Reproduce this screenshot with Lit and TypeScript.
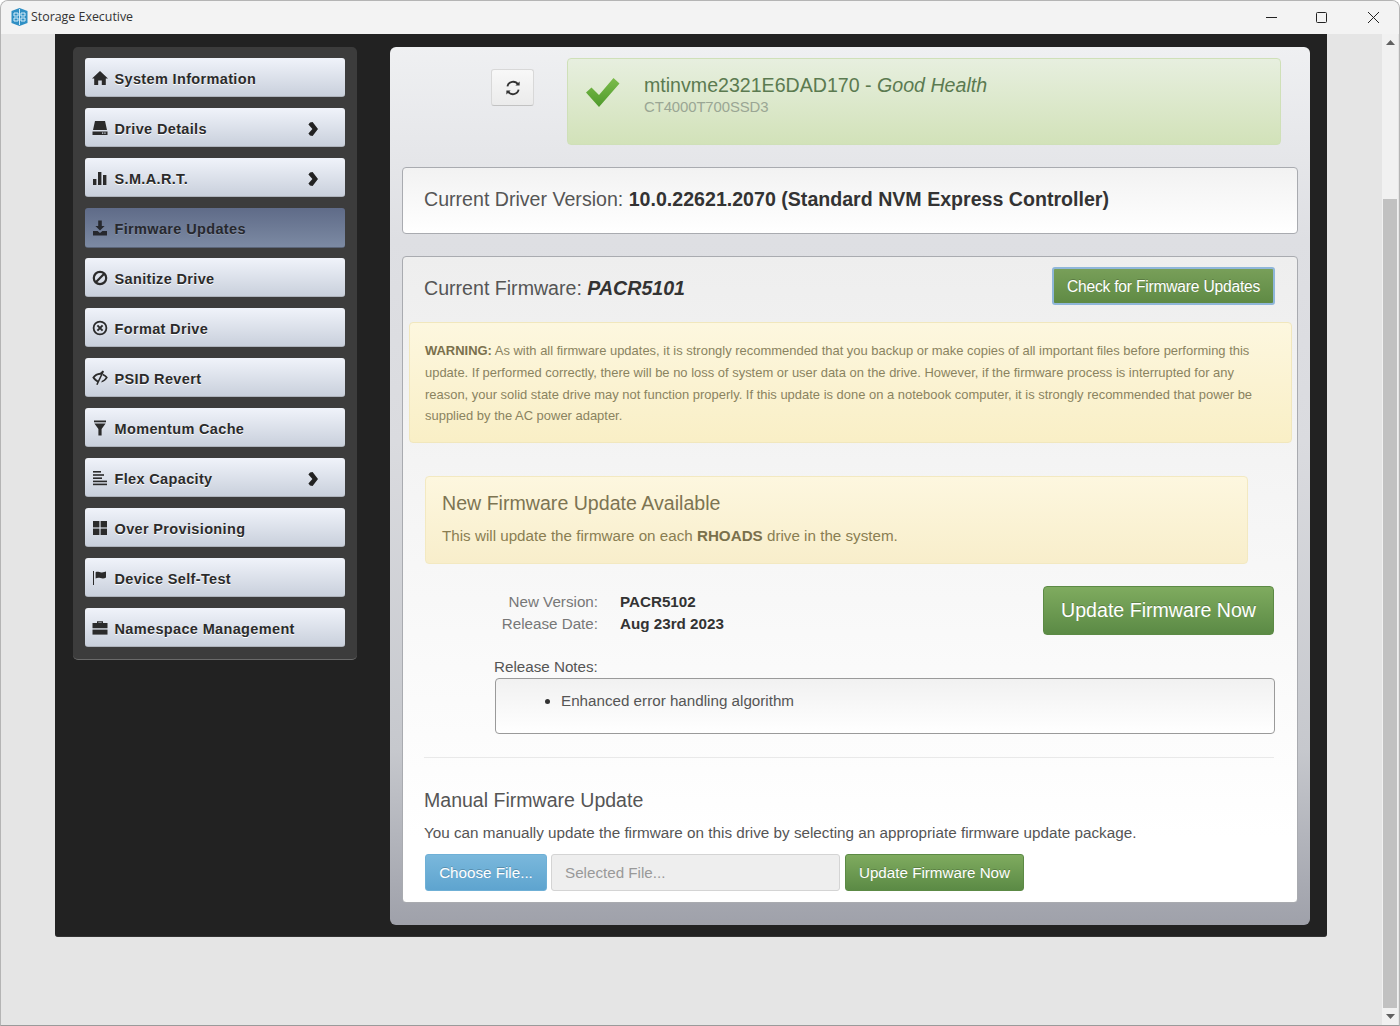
import { LitElement, html, css, svg } from "lit";
import { customElement } from "lit/decorators.js";

const icons: Record<string, unknown> = {
  home: svg`<path d="M8 1 L16 8.6 L13.8 8.6 L13.8 15 L9.8 15 L9.8 10.5 L6.2 10.5 L6.2 15 L2.2 15 L2.2 8.6 L0 8.6 Z"/>`,
  drive: svg`<path d="M3 1 H13 L15 10 H1 Z"/><path fill-rule="evenodd" d="M0.5 11.5 H15.5 V15 H0.5 Z M10 12.6 V13.8 H11.3 V12.6 Z M12.3 12.6 V13.8 H13.6 V12.6 Z"/>`,
  bars: svg`<rect x="1" y="9" width="3.4" height="6"/><rect x="6" y="2" width="3.4" height="13"/><rect x="11" y="5" width="3.4" height="10"/>`,
  download: svg`<path d="M6.2 0.5 H9.8 V6 H12.6 L8 10.6 L3.4 6 H6.2 Z"/><path d="M1 11 H5.6 L8 13 L10.4 11 H15 V15.5 H1 Z"/>`,
  ban: svg`<circle cx="8" cy="8" r="6.2" fill="none" stroke="currentColor" stroke-width="2.2"/><path d="M3.8 12.2 L12.2 3.8" stroke="currentColor" stroke-width="2.2"/>`,
  xcircle: svg`<circle cx="8" cy="8" r="6.4" fill="none" stroke="currentColor" stroke-width="1.8"/><path d="M5.4 5.4 L10.6 10.6 M10.6 5.4 L5.4 10.6" stroke="currentColor" stroke-width="2"/>`,
  eye: svg`<path fill-rule="evenodd" d="M0.3 7.6 C2.4 4.6 5 3 8.2 2.8 L10.8 0.6 L12 1.6 L5.6 15 L4.2 14.4 L5.2 12.2 C3.2 11.2 1.6 9.6 0.3 7.6 Z M2.6 7.6 C3.6 9 4.8 10 6 10.6 L8.8 4.8 C6.2 4.6 4 5.8 2.6 7.6 Z"/><path d="M11 3.8 C12.9 4.6 14.6 5.9 15.8 7.6 C14.2 10.2 12 11.8 9.2 12.4 L9.9 10.8 C11.5 10.2 12.8 9.2 13.7 7.6 C12.8 6.6 11.8 5.9 10.4 5.2 Z"/>`,
  filter: svg`<rect x="2" y="0.5" width="12" height="1.8"/><path d="M2.4 3.6 H13.6 L9.6 9 V15.5 H6.4 V9 Z"/>`,
  lines: svg`<rect x="1" y="1" width="8" height="1.6"/><rect x="1" y="4.2" width="11" height="1.6"/><rect x="1" y="7.4" width="9" height="1.6"/><rect x="1" y="10.6" width="14" height="1.6"/><rect x="1" y="13.6" width="14" height="1.6"/>`,
  grid: svg`<rect x="1" y="1" width="6.4" height="6.4"/><rect x="8.6" y="1" width="6.4" height="6.4"/><rect x="1" y="8.6" width="6.4" height="6.4"/><rect x="8.6" y="8.6" width="6.4" height="6.4"/>`,
  flag: svg`<rect x="1" y="1" width="1" height="14"/><path d="M3.6 2.2 C6 1 7.6 2.8 10 2.4 C11.6 2.2 13 1.6 14 1.4 V7.6 C12.4 8.6 10.4 8.8 8.4 8 C6.8 7.4 5 7.6 3.6 8.4 Z"/>`,
  case: svg`<path fill-rule="evenodd" d="M5 3 V1.2 H11 V3 H15.5 V8.2 H0.5 V3 Z M6.3 2.4 V3 H9.7 V2.4 Z"/><rect x="0.5" y="9.6" width="15" height="5"/>`,
  chev: svg`<path d="M5 1.4 L7.6 1 L13 8 L7.6 15 L5 14.6 L3.4 12.6 L7.4 8 L3.4 3.4 Z"/>`,
};

const nav = [
  { t: "System Information", i: "home" },
  { t: "Drive Details", i: "drive", more: true },
  { t: "S.M.A.R.T.", i: "bars", more: true },
  { t: "Firmware Updates", i: "download", active: true },
  { t: "Sanitize Drive", i: "ban" },
  { t: "Format Drive", i: "xcircle" },
  { t: "PSID Revert", i: "eye" },
  { t: "Momentum Cache", i: "filter" },
  { t: "Flex Capacity", i: "lines", more: true },
  { t: "Over Provisioning", i: "grid" },
  { t: "Device Self-Test", i: "flag" },
  { t: "Namespace Management", i: "case" },
];

@customElement("app-root")
export class AppRoot extends LitElement {
  static styles = css`
    :host { display: block; font-family: "Liberation Sans", Arial, sans-serif; color: #333; }
    * { box-sizing: border-box; }
    .window { width: 1400px; height: 1026px; display: flex; flex-direction: column; background: #e5e5e5; border: 1px solid #b4b4b4; border-bottom-color: #9a9a9a; border-radius: 8px 8px 0 0; overflow: hidden; }
    .titlebar { height: 33px; flex: none; background: #f3f3f3; display: flex; align-items: center; padding: 0 0 2px 10px; font-size: 12.4px; color: #333; font-family: "Open Sans", sans-serif; }
    .logo { width: 17px; height: 18px; margin-right: 3px; flex: none; }
    .wctl { margin-left: auto; display: flex; height: 100%; align-items: center; padding-top: 2px; }
    .wctl span { width: 52px; display: flex; justify-content: center; }
    .wctl span:first-child { padding-left: 4px; }
    .wctl svg { width: 13px; height: 13px; fill: none; stroke: #222; stroke-width: 1; }
    .content { flex: 1; display: flex; min-height: 0; }
    .scroller { flex: 1; padding: 0 0 0 54px; }
    .panel { width: 1272px; height: 903px; background: #222; border-radius: 0 0 3px 3px; padding: 13px 17px 12px 18px; display: flex; border-bottom: 1px solid #333; }
    .side { width: 284px; height: 613px; flex: none; background: #3c3c3c; border-radius: 5px; border-bottom: 1px solid #6a6a6a; padding: 11px 12px; display: flex; flex-direction: column; gap: 11px; }
    .nav { height: 39px; flex: none; display: flex; align-items: center; padding: 3px 0 0 7px; border-radius: 3px; background: linear-gradient(#f0f3fa, #c9d0dc); border-bottom: 1px solid #aeb3bc; font-weight: 700; font-size: 14.5px; letter-spacing: 0.35px; color: #2b2b2b; text-shadow: 0 1px 0 #fff; }
    .nav.active { background: linear-gradient(#5f6b88, #7c8aa3); border-bottom-color: #5b6578; height: 40px; margin-bottom: -1px; padding-top: 2px; color: #26282e; text-shadow: 0 1px 0 #8a94a8; }
    .nav .ic { width: 16px; height: 16px; fill: currentColor; flex: none; margin-right: 6.5px; margin-top: -2px; }
    .nav .ch { margin-left: auto; margin-right: 24px; width: 16px; height: 16px; fill: #222; flex: none; }
    .main { margin-left: 33px; width: 920px; height: 878px; border-radius: 6px; background: linear-gradient(#eff0f2, #dedfe3 22%, #dadbdf 45%, #c6c8cd 80%, #9fa1aa); padding: 11px 12px 22px; display: flex; flex-direction: column; }
    .top { display: flex; height: 87px; flex: none; }
    .refresh { width: 43px; height: 37px; margin: 11px 33px 0 89px; background: linear-gradient(#f8f8f8, #ebebeb); border: 1px solid #d8d8d8; border-bottom: 1px solid #c2c2c2; border-radius: 3px; display: flex; align-items: center; justify-content: center; }
    .refresh svg { width: 16px; height: 16px; fill: none; stroke: #333; stroke-width: 1.9; }
    .health { width: 714px; background: linear-gradient(#e7efdf, #d2e2b9); border: 1px solid #cfe0b8; border-radius: 4px; display: flex; padding: 14px 0 0 18px; }
    .health svg { width: 34px; height: 32px; margin-top: 4px; margin-right: 24px; flex: none; }
    .hname { font-size: 19.6px; color: #5b7a50; line-height: 24px; }
    .hname i { font-style: italic; }
    .hsub { font-size: 14.9px; color: #9aa694; line-height: 18px; letter-spacing: -0.1px; margin-top: 1px; }
    .card { background: linear-gradient(#f2f2f2, #fff); border: 1px solid #a9abb0; border-radius: 4px; }
    .driver { height: 67px; margin-top: 22px; flex: none; display: flex; align-items: center; padding: 0 0 3px 21px; font-size: 19.6px; color: #555; }
    b { color: #333; }
    .fw { margin-top: 22px; flex: 1; display: flex; flex-direction: column; background: linear-gradient(#eeeeee, #fff 90%); border-radius: 4px; padding: 0 5px 0 6px; }
    .fwhead { height: 65px; flex: none; display: flex; align-items: center; padding: 0 17px 2px 15px; font-size: 19.6px; color: #555; justify-content: space-between; }
    .fwhead b { font-style: italic; }
    .btn { color: #fff; display: flex; align-items: center; justify-content: center; border-radius: 3px; text-shadow: 0 -1px 0 rgba(0,0,0,.2); }
    .green { background: linear-gradient(#7fab5f, #5b8a45); border: 1px solid #5c8a45; }
    .check { width: 223px; height: 38px; padding-top: 2px; font-size: 15.6px; border: 2px solid #8fb6d9; background: linear-gradient(#789f59, #5f8a44); letter-spacing: -0.2px; margin-top: -6px; }
    .warn { height: 121px; flex: none; background: linear-gradient(#fdf7df, #f9efc6); border: 1px solid #f1e7bd; border-radius: 4px; padding: 17px 15px; font-size: 12.96px; line-height: 21.8px; color: #8a8360; }
    .warn b { color: #7a704c; }
    .newbox { height: 88px; flex: none; margin: 33px 44px 0 16px; background: linear-gradient(#fdf7df, #f8eecb); border: 1px solid #f3e9c1; border-radius: 4px; padding: 13px 16px; color: #8a7e52; }
    .newbox h3 { margin: 0; font-weight: 400; font-size: 19.6px; line-height: 26px; color: #7d7452; }
    .newbox p { margin: 10px 0 0; font-size: 15.2px; line-height: 20px; }
    .newbox b { color: #7a704c; }
    .update { display: flex; flex: none; margin-top: 21px; height: 50px; padding-right: 18px; }
    .labels { width: 189px; text-align: right; color: #777; font-size: 15.2px; line-height: 21.5px; padding-top: 6px; }
    .vals { margin-left: 22px; font-weight: 700; font-size: 15.2px; line-height: 21.5px; padding-top: 6px; color: #333; }
    .big { margin: 1px 0 0 auto; width: 231px; height: 49px; font-size: 19.6px; border-radius: 4px; padding-bottom: 1px; }
    .rnlabel { margin: 22px 0 1px 85px; font-size: 15.2px; line-height: 20px; color: #555; flex: none; }
    .notes { flex: none; margin: 0 17px 0 86px; height: 56px; border: 1px solid #9a9a9a; border-radius: 4px; background: linear-gradient(#f1f1f1, #fff); padding: 12px 0 0 49px; font-size: 15.2px; line-height: 20px; color: #555; display: flex; align-items: flex-start; }
    .dot { width: 5px; height: 5px; border-radius: 50%; background: #333; margin: 8px 11px 0 0; flex: none; }
    .sep { height: 1px; background: #e9e9e9; margin: 23px 18px 0 15px; flex: none; }
    .mt { margin: 29px 0 0 15px; font-size: 19.55px; line-height: 26px; color: #555; flex: none; }
    .mp { margin: 10px 0 0 15px; font-size: 15.25px; line-height: 20px; color: #555; flex: none; }
    .row { display: flex; margin: 11px 0 0 16px; gap: 4px; height: 37px; flex: none; }
    .blue { width: 122px; background: linear-gradient(#7ab8dc, #5ea4cf); border: 1px solid #6fb0d6; font-size: 15.2px; }
    .input { width: 289px; background: #eee; border: 1px solid #d4d4d4; border-radius: 3px; color: #999; font-size: 15.2px; display: flex; align-items: center; padding-left: 13px; }
    .g2 { width: 179px; margin-left: 1px; font-size: 15.2px; }
    .sb { width: 16px; flex: none; background: #f1f1f1; display: flex; flex-direction: column; margin-right: 1px; }
    .arrow { height: 17px; display: flex; align-items: center; justify-content: center; flex: none; }
    .sb svg { width: 9px; height: 5px; fill: #606060; }
    .track { flex: 1; padding-top: 148px; display: flex; }
    .thumb { flex: 1; background: #c1c1c1; margin: 0 1px; }
  `;

  render() {
    return html`<div class="window">
      <div class="titlebar">
        <svg class="logo" viewBox="0 0 17 18">
          <path d="M8.5 0 L16.5 3 V15 L8.5 18 L.5 15 V3 Z" fill="#2f8fc4"/>
          <path d="M8.5 1 V17" stroke="#cfe8f6" stroke-width="1"/>
          <path d="M3 5 H7 V8 H3 Z M3 10 H7 V13 H3 Z M10 5 H14 V8 H10 Z M10 10 H14 V13 H10 Z" fill="none" stroke="#d7eefa" stroke-width="1"/>
        </svg>
        Storage Executive
        <div class="wctl">
          <span><svg viewBox="0 0 13 13"><path d="M1 6.5 H12"/></svg></span>
          <span><svg viewBox="0 0 13 13"><rect x="1.5" y="1.5" width="10" height="10" rx="1"/></svg></span>
          <span><svg viewBox="0 0 13 13"><path d="M1 1 L12 12 M12 1 L1 12"/></svg></span>
        </div>
      </div>
      <div class="content">
        <div class="scroller">
          <div class="panel">
            <div class="side">
              ${nav.map(
                (n) => html`<div class="nav ${n.active ? "active" : ""}">
                  <svg class="ic" viewBox="0 0 16 16">${icons[n.i]}</svg>${n.t}
                  ${n.more ? html`<svg class="ch" viewBox="0 0 16 16">${icons.chev}</svg>` : ""}
                </div>`
              )}
            </div>
            <div class="main">
              <div class="top">
                <div class="refresh">
                  <svg viewBox="0 0 16 16">
                    <path d="M2.4 6.4 A5.8 5.8 0 0 1 13 4.6"/><path d="M13.6 9.6 A5.8 5.8 0 0 1 3 11.4"/>
                    <path d="M10.4 5.6 H14.6 V1.4 Z" fill="#333" stroke="none"/><path d="M5.6 10.4 H1.4 V14.6 Z" fill="#333" stroke="none"/>
                  </svg>
                </div>
                <div class="health">
                  <svg viewBox="0 0 34 32"><defs><linearGradient id="ck" x1="0" y1="0" x2="0" y2="1"><stop offset="0" stop-color="#7cbc4b"/><stop offset="1" stop-color="#4f9a2c"/></linearGradient></defs>
                    <path d="M0 15.5 L5.5 10.5 L13 18 L27.5 1 L33.5 6.5 L13 30 Z" fill="url(#ck)"/></svg>
                  <div>
                    <div class="hname">mtinvme2321E6DAD170 - <i>Good Health</i></div>
                    <div class="hsub">CT4000T700SSD3</div>
                  </div>
                </div>
              </div>
              <div class="card driver"><span>Current Driver Version: <b>10.0.22621.2070 (Standard NVM Express Controller)</b></span></div>
              <div class="card fw">
                <div class="fwhead"><span>Current Firmware: <b>PACR5101</b></span><div class="btn check">Check for Firmware Updates</div></div>
                <div class="warn"><b>WARNING:</b> As with all firmware updates, it is strongly recommended that you backup or make copies of all important files before performing this update. If performed correctly, there will be no loss of system or user data on the drive. However, if the firmware process is interrupted for any reason, your solid state drive may not function properly. If this update is done on a notebook computer, it is strongly recommended that power be supplied by the AC power adapter.</div>
                <div class="newbox"><h3>New Firmware Update Available</h3><p>This will update the firmware on each <b>RHOADS</b> drive in the system.</p></div>
                <div class="update">
                  <div class="labels">New Version:<br />Release Date:</div>
                  <div class="vals">PACR5102<br />Aug 23rd 2023</div>
                  <div class="btn green big">Update Firmware Now</div>
                </div>
                <div class="rnlabel">Release Notes:</div>
                <div class="notes"><span class="dot"></span>Enhanced error handling algorithm</div>
                <div class="sep"></div>
                <div class="mt">Manual Firmware Update</div>
                <div class="mp">You can manually update the firmware on this drive by selecting an appropriate firmware update package.</div>
                <div class="row">
                  <div class="btn blue">Choose File...</div>
                  <div class="input">Selected File...</div>
                  <div class="btn green g2">Update Firmware Now</div>
                </div>
              </div>
            </div>
          </div>
        </div>
        <div class="sb">
          <div class="arrow"><svg viewBox="0 0 9 5"><path d="M4.5 0 L9 5 H0 Z"/></svg></div>
          <div class="track"><div class="thumb"></div></div>
          <div class="arrow"><svg viewBox="0 0 9 5"><path d="M0 0 H9 L4.5 5 Z"/></svg></div>
        </div>
      </div>
    </div>`;
  }
}
